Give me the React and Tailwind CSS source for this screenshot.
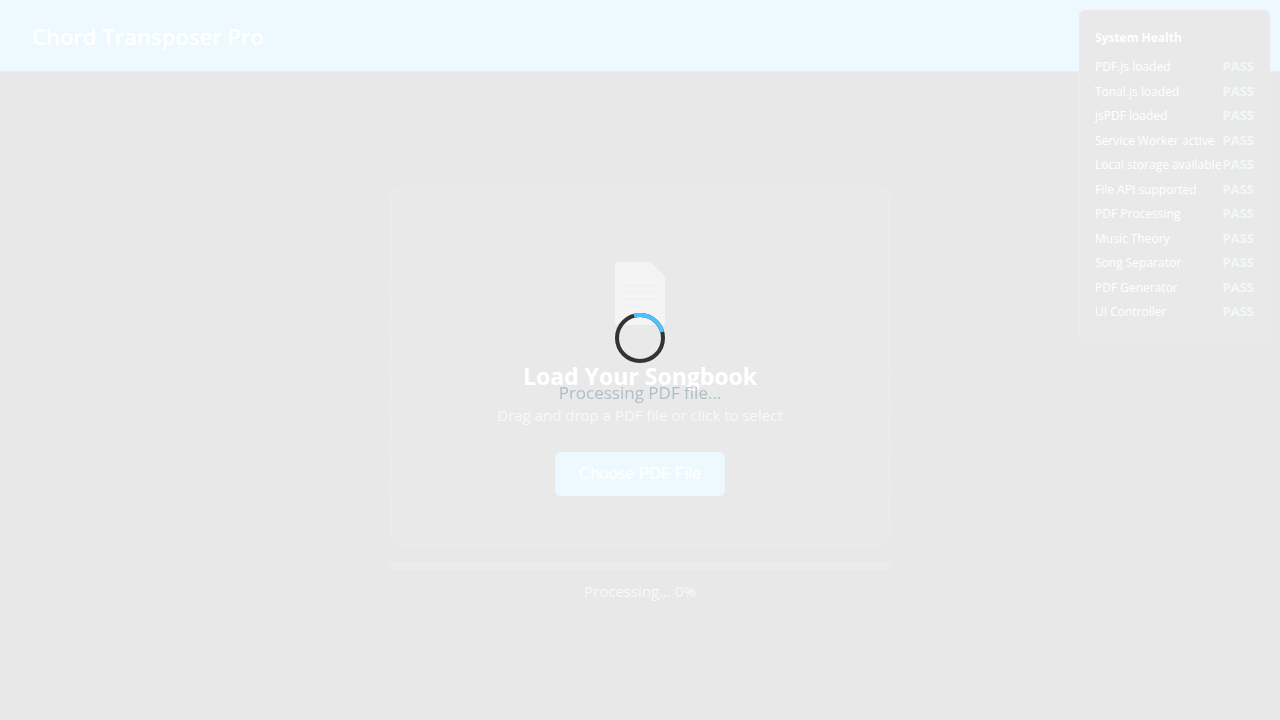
const checks = [
  "PDF.js loaded",
  "Tonal.js loaded",
  "jsPDF loaded",
  "Service Worker active",
  "Local storage available",
  "File API supported",
  "PDF Processing",
  "Music Theory",
  "Song Separator",
  "PDF Generator",
  "UI Controller",
];

function DocumentIcon() {
  return (
    <svg width="50" height="63" viewBox="0 0 50 63" aria-hidden="true">
      <path d="M2.5 0H35L50 15V60.5a2.5 2.5 0 0 1-2.5 2.5H2.5a2.5 2.5 0 0 1-2.5-2.5V2.5a2.5 2.5 0 0 1 2.5-2.5Z" fill="#8c8c8c" />
      <path d="M34 0h1L50 15v1H36a2 2 0 0 1-2-2Z" fill="#828282" />
      <path d="M10 23.5H40M10 30.5H40M10 37H40M10 44H29" stroke="#707070" strokeWidth="2" strokeLinecap="round" />
    </svg>
  );
}

function Header() {
  return (
    <header className="flex h-[72px] items-center border-b border-[#333] bg-[#4fc3f7] px-8">
      <h1 className="text-[22px] leading-9 font-semibold text-white">Chord Transposer Pro</h1>
    </header>
  );
}

function DropZone() {
  return (
    <section className="flex flex-col items-center rounded-xl border-2 border-dashed border-[#333] bg-[#1e1e1e] px-8 py-12 text-center">
      <div className="flex h-[114px] items-center">
        <DocumentIcon />
      </div>
      <h2 className="mt-2 text-[23px] leading-9 font-bold text-white">Load Your Songbook</h2>
      <p className="mt-2 mb-6 text-[15px] leading-[26px] text-[#b0bec5]">Drag and drop a PDF file or click to select</p>
      <button type="button" className="h-11 rounded-md bg-[#4fc3f7] px-6 font-['Liberation_Sans',Arial,sans-serif] text-base text-white">
        Choose PDF File
      </button>
    </section>
  );
}

function SystemHealth() {
  return (
    <aside className="fixed top-[10px] right-[10px] w-[191px] rounded-md border border-[#333] bg-[#1e1e1e] px-[15px] pt-[17px] pb-[19px] text-xs text-white">
      <h2 className="mb-2 leading-5 font-bold">System Health</h2>
      <ul className="flex h-[265px] flex-col justify-between">
        {checks.map((name) => (
          <li key={name} className="flex h-5 items-baseline justify-between leading-5 whitespace-nowrap">
            <span>{name}</span>
            <span className="text-[13px] font-bold text-[#81c784]">PASS</span>
          </li>
        ))}
      </ul>
    </aside>
  );
}

function LoadingOverlay() {
  return (
    <div role="status" className="fixed inset-0 flex flex-col items-center justify-center gap-4 bg-white/90">
      <svg width="50" height="50" viewBox="0 0 50 50" fill="none" strokeWidth="4" aria-hidden="true">
        <circle cx="25" cy="25" r="23" stroke="#333" />
        <path d="M19.05 2.78A23 23 0 0 1 47.22 19.05" stroke="#4fc3f7" />
      </svg>
      <p className="text-[17px] leading-7 text-[#b0bec5]">Processing PDF file...</p>
    </div>
  );
}

export default function App() {
  return (
    <div className="flex min-h-screen flex-col bg-[#1a1a1a] font-['Open_Sans','Noto_Sans',sans-serif]">
      <Header />
      <main className="flex flex-1 flex-col items-center justify-center px-8">
        <div className="w-full max-w-[500px] pb-0.5">
          <DropZone />
          <div role="progressbar" aria-label="PDF processing" aria-valuenow={0} aria-valuemin={0} aria-valuemax={100} className="mt-4 h-2 rounded-full bg-[#333]" />
          <p className="mt-2 text-center text-[15px] leading-[26px] text-[#b0bec5]">Processing... 0%</p>
        </div>
      </main>
      <SystemHealth />
      <LoadingOverlay />
    </div>
  );
}
